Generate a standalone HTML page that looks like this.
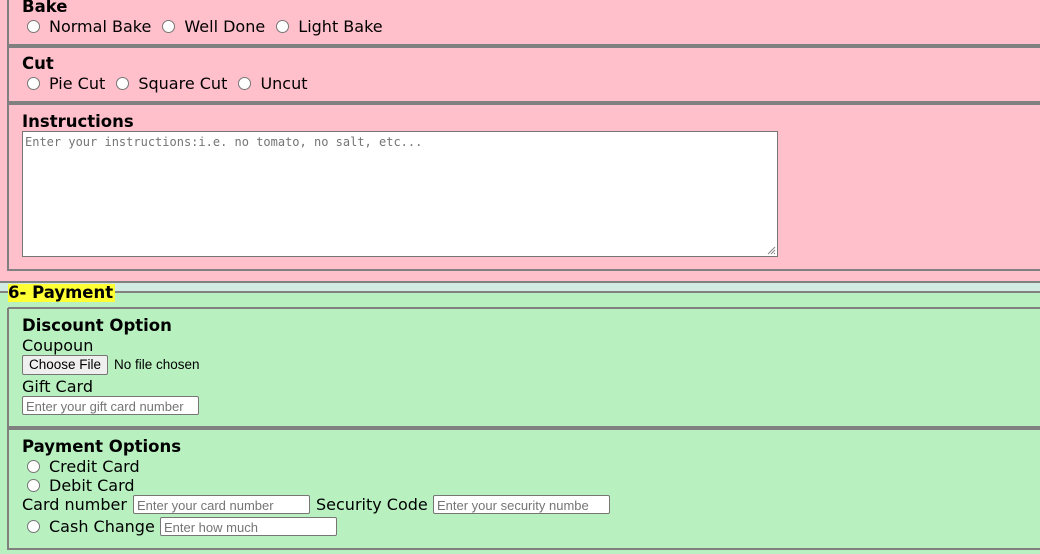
<!DOCTYPE html>
<html><head><style>
body{margin:0;width:1040px;height:554px;overflow:hidden;background:#b8f0c0;font-family:"DejaVu Sans","Liberation Sans",sans-serif;font-size:16px;color:#000;position:relative}
.a{position:absolute;white-space:nowrap}
.h{position:absolute;left:0;right:0;height:0;border-top:2px solid #808080}
.v{position:absolute;width:0;border-left:2px solid #808080}
.b{font-weight:bold;font-size:16.5px}
.r{display:inline-block;width:11px;height:11px;border:1px solid #767676;border-radius:50%;background:#fff;vertical-align:-1px;margin:0 9px 0 6px}
.in{position:absolute;height:19px;border:1px solid #767676;border-radius:2px;background:#fff;font-family:"Liberation Sans",sans-serif;font-size:13px;color:#757575;line-height:19px;padding-left:3px;box-sizing:border-box;overflow:hidden}
</style></head><body>
<div class="a" style="left:0;top:0;width:1040px;height:282px;background:#ffc0cb"></div>
<div class="a" style="left:0;top:283px;width:1040px;height:9px;background:#d2ebe2"></div>
<div class="v" style="left:7px;top:0;height:271px"></div>
<div class="h" style="left:8px;top:44px"></div>
<div class="h" style="left:8px;top:46px"></div>
<div class="h" style="left:8px;top:101px"></div>
<div class="h" style="left:8px;top:103px"></div>
<div class="h" style="left:8px;top:269px"></div>
<div class="h" style="top:281px"></div>
<div class="h" style="top:291px"></div>

<div class="a b" style="left:22px;top:-3px">Bake</div>
<div class="a" style="left:21px;top:17px"><span class="r"></span>Normal Bake <span class="r"></span>Well Done <span class="r"></span>Light Bake</div>
<div class="a b" style="left:22px;top:54px">Cut</div>
<div class="a" style="left:21px;top:74px"><span class="r"></span>Pie Cut <span class="r"></span>Square Cut <span class="r"></span>Uncut</div>
<div class="a b" style="left:22px;top:112px">Instructions</div>
<div class="a" style="left:22px;top:131px;width:756px;height:126px;box-sizing:border-box;border:1px solid #767676;background:#fff;font-family:'DejaVu Sans Mono','Liberation Mono',monospace;font-size:12px;color:#757575;padding:3px 2px">Enter your instructions:i.e. no tomato, no salt, etc...
<svg style="position:absolute;right:1px;bottom:1px" width="9" height="9"><path d="M1 8L8 1M4 8L8 4M7 8L8 7" stroke="#888" stroke-width="1"/></svg></div>

<div class="a b" style="left:8px;top:284px;background:#ffff33;padding:0 2px 0 0;line-height:18px">6- Payment</div>
<div class="v" style="left:7px;top:308px;height:242px"></div>
<div class="h" style="left:8px;top:307px"></div>
<div class="h" style="left:8px;top:426px"></div>
<div class="h" style="left:8px;top:428px"></div>
<div class="h" style="left:8px;top:548px"></div>

<div class="a b" style="left:22px;top:316px">Discount Option</div>
<div class="a" style="left:22px;top:336px">Coupoun</div>
<div class="a" style="left:22px;top:355px;width:86px;height:20px;box-sizing:border-box;border:1px solid #767676;border-radius:2px;background:#efefef;font-family:'Liberation Sans',sans-serif;font-size:13.5px;text-align:center;line-height:18px">Choose File</div>
<div class="a" style="left:114px;top:357px;font-family:'Liberation Sans',sans-serif;font-size:13.5px">No file chosen</div>
<div class="a" style="left:22px;top:377px">Gift Card</div>
<div class="in" style="left:22px;top:396px;width:177px">Enter your gift card number</div>

<div class="a b" style="left:22px;top:437px">Payment Options</div>
<div class="a" style="left:21px;top:457px"><span class="r"></span>Credit Card</div>
<div class="a" style="left:21px;top:476px"><span class="r"></span>Debit Card</div>
<div class="a" style="left:22px;top:495px">Card number</div>
<div class="in" style="left:133px;top:495px;width:177px">Enter your card number</div>
<div class="a" style="left:316px;top:495px">Security Code</div>
<div class="in" style="left:433px;top:495px;width:177px">Enter your security numbe</div>
<div class="a" style="left:21px;top:517px"><span class="r"></span>Cash Change</div>
<div class="in" style="left:160px;top:517px;width:177px">Enter how much</div>
</body></html>
